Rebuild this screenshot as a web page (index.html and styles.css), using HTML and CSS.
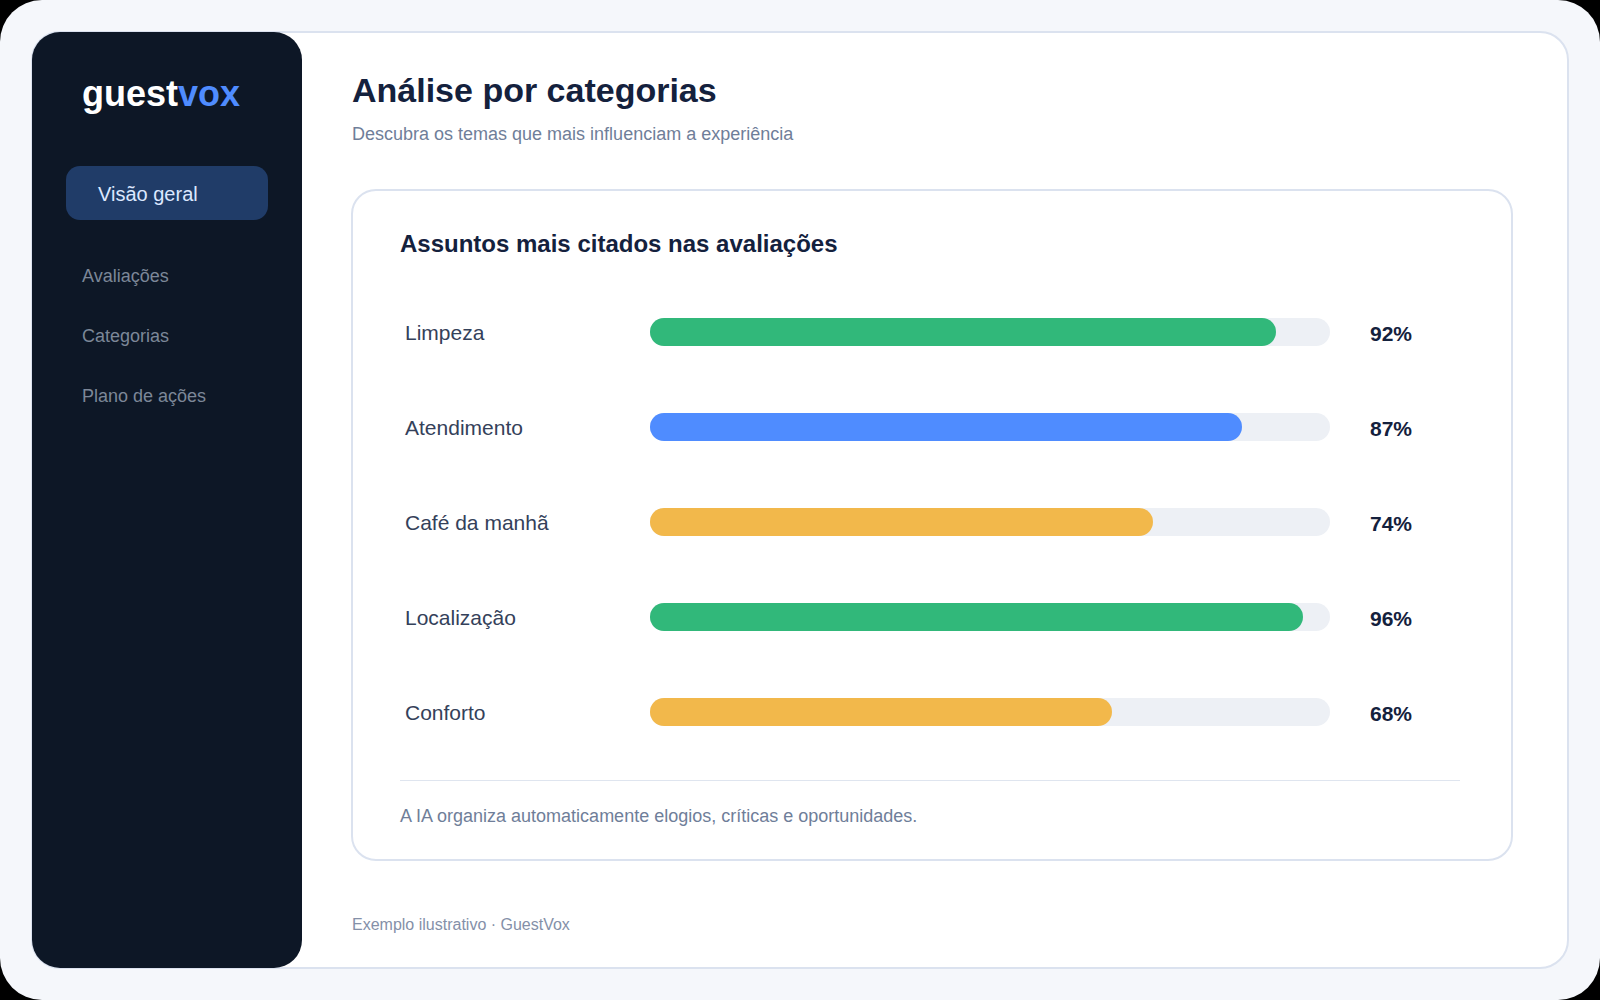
FILE: index.html
```html
<!DOCTYPE html>
<html lang="pt-BR">
<head>
    <meta charset="UTF-8">
    <meta name="viewport" content="width=device-width, initial-scale=1.0">
    <title>GuestVox</title>
    <link rel="stylesheet" href="styles.css">
</head>
<body>

    <div class="page">
        <div class="panel">

            <aside class="sidebar">
                <div class="logo">guest<span>vox</span></div>
                <nav class="nav">
                    <a href="#" class="nav-link active">Visão geral</a>
                    <a href="#" class="nav-link">Avaliações</a>
                    <a href="#" class="nav-link">Categorias</a>
                    <a href="#" class="nav-link">Plano de ações</a>
                </nav>
            </aside>

            <main class="content">
                <h1>Análise por categorias</h1>
                <p class="subtitle">Descubra os temas que mais influenciam a experiência</p>

                <section class="card">
                    <h2>Assuntos mais citados nas avaliações</h2>

                    <ul class="bars">
                        <li class="bar-row">
                            <span class="label">Limpeza</span>
                            <div class="track"><div class="fill green" style="width: 92%"></div></div>
                            <span class="value">92%</span>
                        </li>
                        <li class="bar-row">
                            <span class="label">Atendimento</span>
                            <div class="track"><div class="fill blue" style="width: 87%"></div></div>
                            <span class="value">87%</span>
                        </li>
                        <li class="bar-row">
                            <span class="label">Café da manhã</span>
                            <div class="track"><div class="fill yellow" style="width: 74%"></div></div>
                            <span class="value">74%</span>
                        </li>
                        <li class="bar-row">
                            <span class="label">Localização</span>
                            <div class="track"><div class="fill green" style="width: 96%"></div></div>
                            <span class="value">96%</span>
                        </li>
                        <li class="bar-row">
                            <span class="label">Conforto</span>
                            <div class="track"><div class="fill yellow" style="width: 68%"></div></div>
                            <span class="value">68%</span>
                        </li>
                    </ul>

                    <p class="note">A IA organiza automaticamente elogios, críticas e oportunidades.</p>
                </section>

                <p class="caption">Exemplo ilustrativo · GuestVox</p>
            </main>

        </div>
    </div>

</body>
</html>
```
FILE: styles.css
```css
* {
    box-sizing: border-box;
}

html {
    background-color: #000;
}

body {
    margin: 0;
    font-family: "Liberation Sans", Arial, sans-serif;
    color: #14213d;
}

h1, h2, p, ul {
    margin: 0;
    padding: 0;
}

.page {
    display: flex;
    min-height: 100vh;
    padding: 31px;
    background-color: #f5f7fb;
    border-radius: 42px;
}

.panel {
    display: flex;
    flex: 1;
    background-color: #fff;
    border: 2px solid #dbe2ef;
    border-radius: 29px;
}

/* sidebar covers half of the panel border */
.sidebar {
    flex: none;
    width: 270px;
    margin: -1px;
    padding: 42px 34px;
    background-color: #0d1726;
    border-radius: 28px;
}

.logo {
    padding-left: 16px;
    font-size: 36px;
    font-weight: bold;
    line-height: 40px;
    color: #fff;
}

.logo span {
    color: #4f8cff;
}

.nav {
    display: flex;
    flex-direction: column;
    margin-top: 52px;
}

.nav-link {
    padding: 0 16px;
    font-size: 18px;
    line-height: 60px;
    color: #7c8798;
    text-decoration: none;
}

.nav-link.active {
    margin-bottom: 26px;
    padding: 2px 32px 0;
    font-size: 20px;
    line-height: 52px;
    color: #dce8ff;
    background-color: #203c68;
    border-radius: 14px;
}

.content {
    flex: 1;
    padding: 37px 54px 32px 51px;
}

h1 {
    font-size: 34px;
    line-height: 40px;
}

.subtitle {
    margin-top: 12px;
    font-size: 18px;
    line-height: 24px;
    color: #6f7e99;
}

.card {
    margin: 43px 0 54px -1px;
    padding: 39px 51px 31px 47px;
    border: 2px solid #dbe2ef;
    border-radius: 25px;
}

h2 {
    font-size: 24px;
    line-height: 28px;
}

.bars {
    display: flex;
    flex-direction: column;
    gap: 67px;
    margin: 60px 0 54px;
    padding-left: 5px;
    list-style: none;
}

.bar-row {
    display: flex;
    height: 28px;
    font-size: 21px;
    line-height: 30px;
}

.label {
    width: 245px;
    color: #34415a;
}

.track {
    flex: 1;
    background-color: #edf0f5;
    border-radius: 14px;
}

.fill {
    height: 100%;
    border-radius: 14px;
}

.green {
    background-color: #31b87a;
}

.blue {
    background-color: #4f8cff;
}

.yellow {
    background-color: #f2b84b;
}

.value {
    width: 130px;
    padding-left: 40px;
    font-weight: bold;
    line-height: 32px;
}

.note {
    padding-top: 23px;
    border-top: 1px solid #dfe5ef;
    font-size: 18px;
    line-height: 24px;
    color: #6f7e99;
}

.caption {
    font-size: 16px;
    line-height: 20px;
    color: #8490a8;
}
```
